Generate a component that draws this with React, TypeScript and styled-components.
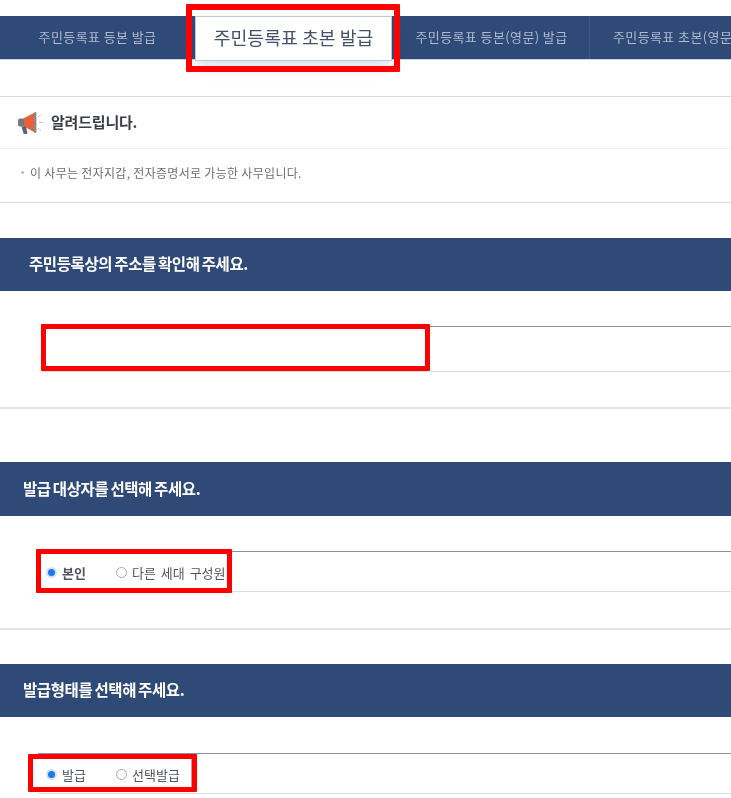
import React from 'react';
import styled, { createGlobalStyle } from 'styled-components';

const GlobalStyle = createGlobalStyle`
  html, body {
    margin: 0;
    padding: 0;
    background: #fff;
    overflow: hidden;
  }
  body {
    font-family: "Noto Sans CJK KR", "Noto Sans", sans-serif;
    color: #333;
  }
`;

const Page = styled.div`
  position: relative;
  width: 731px;
  height: 798px;
  overflow: hidden;
  padding-top: 16px;
  box-sizing: border-box;
  filter: blur(0.5px);
`;

const TabBar = styled.div`
  display: flex;
  height: 44px;
  margin-left: -2px;
  background: #2f4a77;
  border-bottom: 1px solid #c9d2e0;
  box-sizing: border-box;
`;

const Tab = styled.div<{ $active?: boolean; $divider?: boolean }>`
  flex: 0 0 197px;
  display: flex;
  align-items: center;
  justify-content: center;
  white-space: nowrap;
  box-sizing: border-box;
  padding: ${({ $active }) => ($active ? '0 0 3px' : '0 0 2px 2px')};
  font-size: ${({ $active }) => ($active ? '18.3px' : '13px')};
  letter-spacing: ${({ $active }) => ($active ? '0' : '0.4px')};
  color: ${({ $active }) => ($active ? '#465066' : '#aebbd0')};
  background: ${({ $active }) => ($active ? '#fff' : 'transparent')};
  border: ${({ $active }) => ($active ? '1px solid #bcc8dd' : '0')};
  border-left: ${({ $divider }) => ($divider ? '1px solid #3f5a87' : undefined)};
  box-shadow: ${({ $active }) => ($active ? '0 6px 14px rgba(60, 80, 120, 0.18)' : 'none')};
  height: ${({ $active }) => ($active ? '45px' : 'auto')};
  z-index: ${({ $active }) => ($active ? 1 : 0)};
`;

const Notice = styled.section`
  margin-top: 36px;
  border-top: 1px solid #dcdcdc;
  border-bottom: 1px solid #dcdcdc;
`;

const NoticeHead = styled.div`
  display: flex;
  align-items: center;
  gap: 7px;
  height: 51px;
  padding-left: 17px;
  border-bottom: 1px solid #eeeeee;
`;

const NoticeTitle = styled.h2`
  margin: 0 0 2px;
  font-size: 15px;
  font-weight: 700;
  letter-spacing: -0.2px;
  color: #3a3d42;
`;

const NoticeBody = styled.p`
  display: flex;
  align-items: center;
  gap: 6px;
  height: 47px;
  margin: 0;
  padding: 0 0 6px 21px;
  font-size: 12px;
  letter-spacing: 0.3px;
  color: #6a6f76;
  &::before {
    content: '';
    width: 3px;
    height: 3px;
    border-radius: 50%;
    background: #b9bdc2;
  }
`;

const SectionBar = styled.h3<{ $indent: number; $height: number; $top: number }>`
  display: flex;
  align-items: center;
  box-sizing: border-box;
  margin: ${({ $top }) => $top}px 0 0;
  height: ${({ $height }) => $height}px;
  padding: 0 0 3px ${({ $indent }) => $indent}px;
  background: #2f4a77;
  color: #fff;
  font-size: 15.5px;
  font-weight: 700;
  letter-spacing: -0.4px;
  word-spacing: -1px;
`;

const FieldRow = styled.div<{ $top: number; $height: number; $left: number }>`
  display: flex;
  align-items: center;
  gap: 30px;
  margin: ${({ $top }) => $top}px 0 0 ${({ $left }) => $left}px;
  height: ${({ $height }) => $height}px;
  padding: 2px 0 0 ${({ $left }) => 46 - $left}px;
  border-top: 1px solid #8791a8;
  border-bottom: 1px solid #dedede;
  box-sizing: border-box;
`;

const RuleLine = styled.div<{ $top: number }>`
  margin-top: ${({ $top }) => $top}px;
  border-top: 2px solid #e4e4e4;
`;

const RadioLabel = styled.label<{ $width: number }>`
  display: flex;
  align-items: center;
  gap: 5px;
  width: ${({ $width }) => $width}px;
  white-space: nowrap;
  font-size: 13px;
  word-spacing: 2px;
  color: #50545a;
`;

const RadioDot = styled.span<{ $checked?: boolean }>`
  flex: none;
  width: 11px;
  height: 11px;
  border-radius: 50%;
  box-sizing: border-box;
  background: ${({ $checked }) => ($checked ? '#1f78e6' : '#fff')};
  border: ${({ $checked }) => ($checked ? '2px solid #cfe2fa' : '1.5px solid #a9a9a9')};
`;

// 스크린샷 위에 덧그린 빨간 표시 박스
const Callout = styled.div<{ $x: number; $y: number; $w: number; $h: number; $t?: number; $seam?: boolean }>`
  position: absolute;
  left: ${({ $x }) => $x}px;
  top: ${({ $y }) => $y}px;
  width: ${({ $w }) => $w}px;
  height: ${({ $h }) => $h}px;
  box-sizing: border-box;
  border: ${({ $t }) => $t ?? 5}px solid #ff0000;
  border-radius: 1px;
  z-index: 2;
  box-shadow: ${({ $seam }) => ($seam ? 'inset -1px 0 0 #b9a0a0' : 'none')};
`;

const Megaphone = () => (
  <svg width="27" height="24" viewBox="0 0 27 24" aria-hidden="true">
    <path d="M1 9.5 Q1 7.5 3 7.5 H8 V15.5 H3 Q1 15.5 1 13.5Z" fill="#77787c" />
    <path d="M7 7 L18 1.5 V21.5 L7 15.5Z" fill="#e8603c" />
    <rect x="17" y="1" width="2.4" height="21" rx="1.2" fill="#8a8a8e" />
    <path d="M4.5 15.5 H9 L10.5 22.5 Q8 23.5 6.5 22.5Z" fill="#5d6470" />
    <path d="M21 6 L24 3.5 M22 11.5 H26 M21 17 L24 19.5" stroke="#c4c7cc" strokeWidth="1" fill="none" />
  </svg>
);

const App = () => {
  return (
    <Page>
      <GlobalStyle />
      <TabBar>
        <Tab>주민등록표 등본 발급</Tab>
        <Tab $active>주민등록표 초본 발급</Tab>
        <Tab>주민등록표 등본(영문) 발급</Tab>
        <Tab $divider>주민등록표 초본(영문) 발급</Tab>
      </TabBar>

      <Notice>
        <NoticeHead>
          <Megaphone />
          <NoticeTitle>알려드립니다.</NoticeTitle>
        </NoticeHead>
        <NoticeBody>이 사무는 전자지갑, 전자증명서로 가능한 사무입니다.</NoticeBody>
      </Notice>

      <SectionBar $top={35} $height={53} $indent={29}>주민등록상의 주소를 확인해 주세요.</SectionBar>
      <FieldRow $top={35} $height={46} $left={42} />
      <RuleLine $top={35} />

      <SectionBar $top={53} $height={54} $indent={23}>발급 대상자를 선택해 주세요.</SectionBar>
      <FieldRow $top={35} $height={41} $left={40}>
        <RadioLabel $width={40}><RadioDot $checked /><b>본인</b></RadioLabel>
        <RadioLabel $width={120}><RadioDot />다른 세대 구성원</RadioLabel>
      </FieldRow>
      <RuleLine $top={36} />

      <SectionBar $top={34} $height={53} $indent={23}>발급형태를 선택해 주세요.</SectionBar>
      <FieldRow $top={36} $height={41} $left={38}>
        <RadioLabel $width={40}><RadioDot $checked />발급</RadioLabel>
        <RadioLabel $width={70}><RadioDot />선택발급</RadioLabel>
      </FieldRow>

      <Callout $x={186} $y={4} $w={214} $h={68} $t={6} />
      <Callout $x={41} $y={324} $w={389} $h={47} />
      <Callout $x={36} $y={549} $w={196} $h={44} />
      <Callout $x={28} $y={754} $w={169} $h={38} $seam />
    </Page>
  );
};

export default App;
